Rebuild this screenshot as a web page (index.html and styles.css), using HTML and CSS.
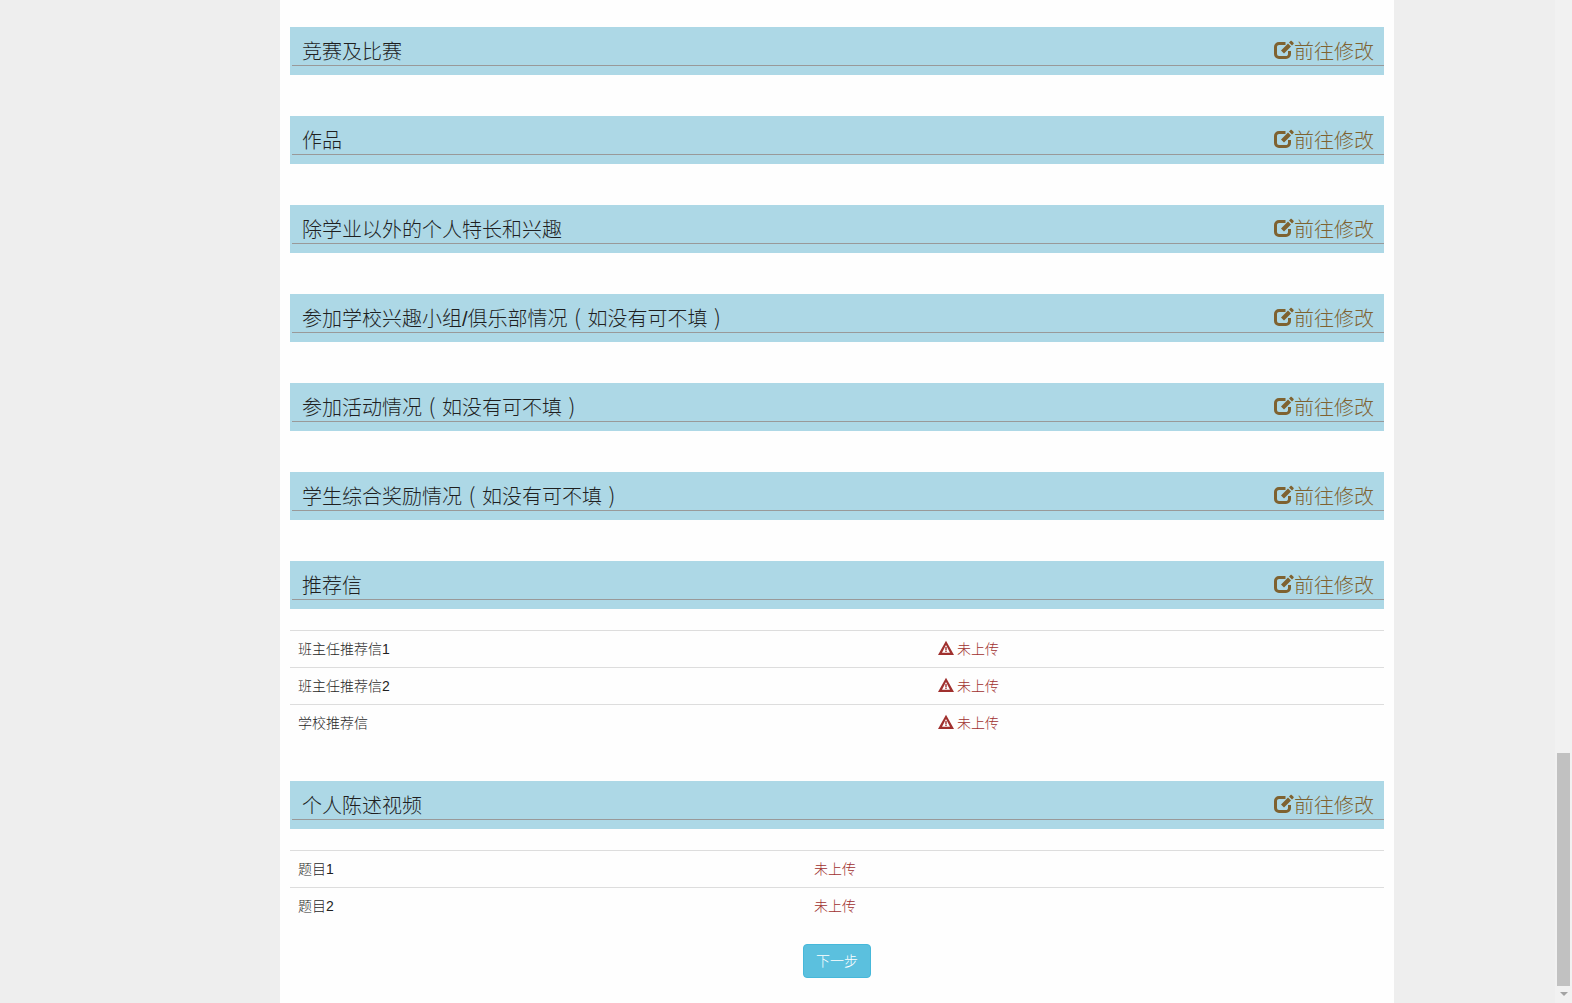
FILE: index.html
```html
<!DOCTYPE html>
<html lang="zh-CN">
<head>
<meta charset="utf-8">
<title>申请</title>
<link rel="stylesheet" href="styles.css">
</head>
<body>
<svg class="defs" width="0" height="0" aria-hidden="true">
  <symbol id="i-edit" viewBox="0 0 20 20">
    <path d="M15.5 11v3a3.5 3.5 0 0 1-3.5 3.5H5A3.5 3.5 0 0 1 1.5 14V7A3.5 3.5 0 0 1 5 3.5h6.5" fill="none" stroke="currentColor" stroke-width="3"/>
    <path d="M7 10.5l3 3 7-7-3-3z M15 2.5l3 3 1.5-1.5c.4-.4.4-.8 0-1.2l-1.8-1.8c-.4-.4-.8-.4-1.2 0z" fill="currentColor"/>
  </symbol>
  <symbol id="i-warn" viewBox="0 0 16 16">
    <path fill-rule="evenodd" fill="currentColor" d="M8 .8L16 15H0zM8 5L4 12.7h8zM7.3 6.9h1.4v3.1H7.3zM7.3 10.6h1.4v1.4H7.3z"/>
  </symbol>
</svg>
<div class="viewport">
  <main class="page">
    <section class="block">
      <h3 class="band"><span class="title">竞赛及比赛</span><a class="edit"><svg class="edit-icon"><use href="#i-edit"/></svg>前往修改</a></h3>
    </section>
    <section class="block">
      <h3 class="band"><span class="title">作品</span><a class="edit"><svg class="edit-icon"><use href="#i-edit"/></svg>前往修改</a></h3>
    </section>
    <section class="block">
      <h3 class="band"><span class="title">除学业以外的个人特长和兴趣</span><a class="edit"><svg class="edit-icon"><use href="#i-edit"/></svg>前往修改</a></h3>
    </section>
    <section class="block">
      <h3 class="band"><span class="title">参加学校兴趣小组/俱乐部情况<span class="paren">(</span>如没有可不填<span class="paren">)</span></span><a class="edit"><svg class="edit-icon"><use href="#i-edit"/></svg>前往修改</a></h3>
    </section>
    <section class="block">
      <h3 class="band"><span class="title">参加活动情况<span class="paren">(</span>如没有可不填<span class="paren">)</span></span><a class="edit"><svg class="edit-icon"><use href="#i-edit"/></svg>前往修改</a></h3>
    </section>
    <section class="block">
      <h3 class="band"><span class="title">学生综合奖励情况<span class="paren">(</span>如没有可不填<span class="paren">)</span></span><a class="edit"><svg class="edit-icon"><use href="#i-edit"/></svg>前往修改</a></h3>
    </section>
    <section class="block block-letters">
      <h3 class="band"><span class="title">推荐信</span><a class="edit"><svg class="edit-icon"><use href="#i-edit"/></svg>前往修改</a></h3>
      <table class="rows rows-letters">
        <tr><td>班主任推荐信1</td><td class="missing"><svg class="warn-icon"><use href="#i-warn"/></svg>未上传</td></tr>
        <tr><td>班主任推荐信2</td><td class="missing"><svg class="warn-icon"><use href="#i-warn"/></svg>未上传</td></tr>
        <tr><td>学校推荐信</td><td class="missing"><svg class="warn-icon"><use href="#i-warn"/></svg>未上传</td></tr>
      </table>
    </section>
    <section class="block block-last">
      <h3 class="band"><span class="title">个人陈述视频</span><a class="edit"><svg class="edit-icon"><use href="#i-edit"/></svg>前往修改</a></h3>
      <table class="rows rows-video">
        <tr><td>题目1</td><td class="missing">未上传</td></tr>
        <tr><td>题目2</td><td class="missing">未上传</td></tr>
      </table>
    </section>
    <div class="actions"><button class="next" type="button">下一步</button></div>
  </main>
  <aside class="scrollbar" aria-hidden="true">
    <div class="thumb"></div>
    <div class="arrow"></div>
  </aside>
</div>
</body>
</html>
```
FILE: styles.css
```css
* { box-sizing: border-box; }
html, body { margin: 0; height: 100%; overflow: hidden; }
body {
  background: #eee;
  color: #1f1f1f;
  font-family: "Liberation Sans", "Noto Sans CJK SC", sans-serif;
  font-size: 14px;
  font-weight: 300;
  line-height: 20px;
}
.defs { position: absolute; }
.viewport { display: flex; height: 1003px; }
.page {
  width: 1114px;
  height: 1003px;
  margin-left: 280px;
  margin-right: 161px;
  padding: 27px 10px 0;
  background: #fefefe;
  flex: none;
}
.block { margin-bottom: 41px; }
.block-letters { margin-bottom: 39px; }
.block-last { margin-bottom: 0; }
.band {
  position: relative;
  display: flex;
  justify-content: space-between;
  height: 48px;
  margin: 0;
  background: #add8e6;
  font-size: 20px;
  font-weight: 300;
  line-height: 22px;
}
.band::after {
  content: "";
  position: absolute;
  left: 2px;
  right: 0;
  top: 38px;
  border-top: 1px solid #999;
}
.title { padding: 14px 0 0 12px; }
.paren {
  display: inline-block;
  width: 20px;
  font-family: "Noto Sans CJK SC", sans-serif;
  font-size: 22px;
  line-height: 14px;
  text-align: center;
}
.edit {
  display: flex;
  align-items: flex-start;
  padding: 14px 10px 0 0;
  color: #7f6230;
}
.edit-icon { width: 20px; height: 20px; margin-top: -1px; flex: none; }
.rows {
  width: 100%;
  margin-top: 21px;
  border-collapse: collapse;
  table-layout: fixed;
}
.rows td { padding: 8px; height: 37px; border-top: 1px solid #ddd; }
.rows-letters td:first-child { width: 640px; }
.rows-video td:first-child { width: 516px; }
.missing { color: #a0302e; }
.warn-icon { width: 16px; height: 16px; margin-right: 3px; vertical-align: -2px; }
.actions { display: flex; justify-content: center; margin-top: 20px; }
.next {
  width: 68px;
  height: 34px;
  padding: 6px 12px;
  border: 1px solid #46b8da;
  border-radius: 4px;
  background: #5bc0de;
  color: #fff;
  font: inherit;
}
.scrollbar {
  width: 17px;
  flex: none;
  background: #f1f1f1;
  padding-top: 753px;
}
.thumb { width: 13px; height: 233px; margin: 0 2px; background: #c1c1c1; }
.arrow {
  width: 0;
  height: 0;
  margin: 6px auto 0;
  border: 4px solid transparent;
  border-top: 4px solid #a3a3a3;
}
```
